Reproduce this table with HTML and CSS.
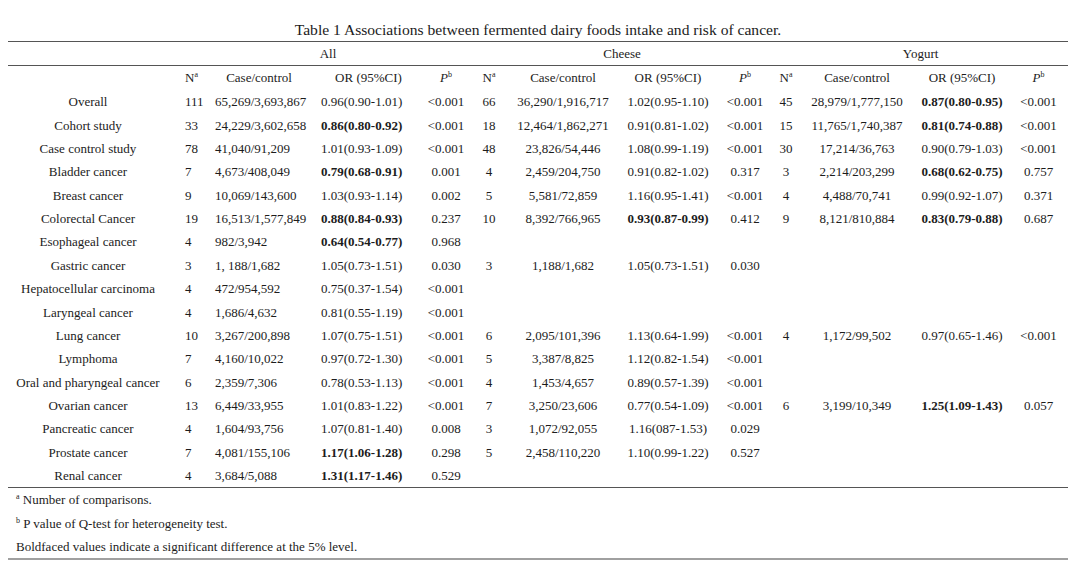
FILE: index.html
```html
<!DOCTYPE html>
<html>
<head>
<meta charset="utf-8">
<link rel="stylesheet" href="styles.css">
</head>
<body>
<div class="wrap">
  <div class="title">Table 1 Associations between fermented dairy foods intake and risk of cancer.</div>
  <table class="tbl">
    <colgroup>
      <col class="c-label"><col class="c-n1"><col class="c-cc1"><col class="c-or1"><col class="c-p1">
      <col class="c-n2"><col class="c-cc2"><col class="c-or2"><col class="c-p2">
      <col class="c-n3"><col class="c-cc3"><col class="c-or3"><col class="c-p3">
    </colgroup>
    <thead>
      <tr class="grp">
        <th></th>
        <th colspan="4">All</th>
        <th colspan="4">Cheese</th>
        <th colspan="4">Yogurt</th>
      </tr>
      <tr class="hdr">
        <th></th>
        <th class="l">N<sup>a</sup></th>
        <th class="cc1">Case/control</th>
        <th class="or1">OR (95%CI)</th>
        <th><i>P</i><sup>b</sup></th>
        <th>N<sup>a</sup></th>
        <th>Case/control</th>
        <th>OR (95%CI)</th>
        <th><i>P</i><sup>b</sup></th>
        <th>N<sup>a</sup></th>
        <th>Case/control</th>
        <th>OR (95%CI)</th>
        <th class="lastp"><i>P</i><sup>b</sup></th>
      </tr>
    </thead>
    <tbody>
      <tr><td>Overall</td><td class="l">111</td><td class="l">65,269/3,693,867</td><td class="l">0.96(0.90-1.01)</td><td>&lt;0.001</td><td>66</td><td>36,290/1,916,717</td><td>1.02(0.95-1.10)</td><td>&lt;0.001</td><td>45</td><td>28,979/1,777,150</td><td><b>0.87(0.80-0.95)</b></td><td class="lastp">&lt;0.001</td></tr>
      <tr><td>Cohort study</td><td class="l">33</td><td class="l">24,229/3,602,658</td><td class="l"><b>0.86(0.80-0.92)</b></td><td>&lt;0.001</td><td>18</td><td>12,464/1,862,271</td><td>0.91(0.81-1.02)</td><td>&lt;0.001</td><td>15</td><td>11,765/1,740,387</td><td><b>0.81(0.74-0.88)</b></td><td class="lastp">&lt;0.001</td></tr>
      <tr><td>Case control study</td><td class="l">78</td><td class="l">41,040/91,209</td><td class="l">1.01(0.93-1.09)</td><td>&lt;0.001</td><td>48</td><td>23,826/54,446</td><td>1.08(0.99-1.19)</td><td>&lt;0.001</td><td>30</td><td>17,214/36,763</td><td>0.90(0.79-1.03)</td><td class="lastp">&lt;0.001</td></tr>
      <tr><td>Bladder cancer</td><td class="l">7</td><td class="l">4,673/408,049</td><td class="l"><b>0.79(0.68-0.91)</b></td><td>0.001</td><td>4</td><td>2,459/204,750</td><td>0.91(0.82-1.02)</td><td>0.317</td><td>3</td><td>2,214/203,299</td><td><b>0.68(0.62-0.75)</b></td><td class="lastp">0.757</td></tr>
      <tr><td>Breast cancer</td><td class="l">9</td><td class="l">10,069/143,600</td><td class="l">1.03(0.93-1.14)</td><td>0.002</td><td>5</td><td>5,581/72,859</td><td>1.16(0.95-1.41)</td><td>&lt;0.001</td><td>4</td><td>4,488/70,741</td><td>0.99(0.92-1.07)</td><td class="lastp">0.371</td></tr>
      <tr><td>Colorectal Cancer</td><td class="l">19</td><td class="l">16,513/1,577,849</td><td class="l"><b>0.88(0.84-0.93)</b></td><td>0.237</td><td>10</td><td>8,392/766,965</td><td><b>0.93(0.87-0.99)</b></td><td>0.412</td><td>9</td><td>8,121/810,884</td><td><b>0.83(0.79-0.88)</b></td><td class="lastp">0.687</td></tr>
      <tr><td>Esophageal cancer</td><td class="l">4</td><td class="l">982/3,942</td><td class="l"><b>0.64(0.54-0.77)</b></td><td>0.968</td><td></td><td></td><td></td><td></td><td></td><td></td><td></td><td class="lastp"></td></tr>
      <tr><td>Gastric cancer</td><td class="l">3</td><td class="l">1, 188/1,682</td><td class="l">1.05(0.73-1.51)</td><td>0.030</td><td>3</td><td>1,188/1,682</td><td>1.05(0.73-1.51)</td><td>0.030</td><td></td><td></td><td></td><td class="lastp"></td></tr>
      <tr><td>Hepatocellular carcinoma</td><td class="l">4</td><td class="l">472/954,592</td><td class="l">0.75(0.37-1.54)</td><td>&lt;0.001</td><td></td><td></td><td></td><td></td><td></td><td></td><td></td><td class="lastp"></td></tr>
      <tr><td>Laryngeal cancer</td><td class="l">4</td><td class="l">1,686/4,632</td><td class="l">0.81(0.55-1.19)</td><td>&lt;0.001</td><td></td><td></td><td></td><td></td><td></td><td></td><td></td><td class="lastp"></td></tr>
      <tr><td>Lung cancer</td><td class="l">10</td><td class="l">3,267/200,898</td><td class="l">1.07(0.75-1.51)</td><td>&lt;0.001</td><td>6</td><td>2,095/101,396</td><td>1.13(0.64-1.99)</td><td>&lt;0.001</td><td>4</td><td>1,172/99,502</td><td>0.97(0.65-1.46)</td><td class="lastp">&lt;0.001</td></tr>
      <tr><td>Lymphoma</td><td class="l">7</td><td class="l">4,160/10,022</td><td class="l">0.97(0.72-1.30)</td><td>&lt;0.001</td><td>5</td><td>3,387/8,825</td><td>1.12(0.82-1.54)</td><td>&lt;0.001</td><td></td><td></td><td></td><td class="lastp"></td></tr>
      <tr><td>Oral and pharyngeal cancer</td><td class="l">6</td><td class="l">2,359/7,306</td><td class="l">0.78(0.53-1.13)</td><td>&lt;0.001</td><td>4</td><td>1,453/4,657</td><td>0.89(0.57-1.39)</td><td>&lt;0.001</td><td></td><td></td><td></td><td class="lastp"></td></tr>
      <tr><td>Ovarian cancer</td><td class="l">13</td><td class="l">6,449/33,955</td><td class="l">1.01(0.83-1.22)</td><td>&lt;0.001</td><td>7</td><td>3,250/23,606</td><td>0.77(0.54-1.09)</td><td>&lt;0.001</td><td>6</td><td>3,199/10,349</td><td><b>1.25(1.09-1.43)</b></td><td class="lastp">0.057</td></tr>
      <tr><td>Pancreatic cancer</td><td class="l">4</td><td class="l">1,604/93,756</td><td class="l">1.07(0.81-1.40)</td><td>0.008</td><td>3</td><td>1,072/92,055</td><td>1.16(087-1.53)</td><td>0.029</td><td></td><td></td><td></td><td class="lastp"></td></tr>
      <tr><td>Prostate cancer</td><td class="l">7</td><td class="l">4,081/155,106</td><td class="l"><b>1.17(1.06-1.28)</b></td><td>0.298</td><td>5</td><td>2,458/110,220</td><td>1.10(0.99-1.22)</td><td>0.527</td><td></td><td></td><td></td><td class="lastp"></td></tr>
      <tr><td>Renal cancer</td><td class="l">4</td><td class="l">3,684/5,088</td><td class="l"><b>1.31(1.17-1.46)</b></td><td>0.529</td><td></td><td></td><td></td><td></td><td></td><td></td><td></td><td class="lastp"></td></tr>
    </tbody>
  </table>
  <div class="notes">
    <div class="note"><sup>a</sup> Number of comparisons.</div>
    <div class="note"><sup>b</sup> P value of Q-test for heterogeneity test.</div>
    <div class="note">Boldfaced values indicate a significant difference at the 5% level.</div>
  </div>
</div>
</body>
</html>
```
FILE: styles.css
```css
html, body {
  margin: 0;
  padding: 0;
  background: #ffffff;
}
body {
  padding: 8px;
  font-family: "Liberation Serif", "Times New Roman", serif;
  color: #1c1c1c;
  font-size: 13px;
}
.wrap {
  width: 1060px;
}
.title {
  text-align: center;
  font-size: 15.6px;
  line-height: 18px;
  padding-top: 13px;
  padding-bottom: 2px;
}
.tbl {
  width: 1060px;
  border-collapse: collapse;
  table-layout: fixed;
  border-top: 1px solid #555;
}
.c-label { width: 160px; }
.c-n1 { width: 44px; }
.c-cc1 { width: 104px; }
.c-or1 { width: 105px; }
.c-p1 { width: 50px; }
.c-n2 { width: 36px; }
.c-cc2 { width: 112px; }
.c-or2 { width: 98px; }
.c-p2 { width: 56px; }
.c-n3 { width: 26px; }
.c-cc3 { width: 116px; }
.c-or3 { width: 94px; }
.c-p3 { width: 59px; }

.tbl th, .tbl td {
  padding: 0;
  text-align: center;
  white-space: nowrap;
  font-weight: normal;
}
.tbl b { font-weight: bold; }
.grp th {
  height: 23px;
  line-height: 23px;
  border-bottom: 1px solid #555;
}
.hdr th {
  height: 24px;
  line-height: 24px;
}
.tbl tbody td {
  height: 23.375px;
  line-height: 23px;
}
.tbl td.l, .tbl th.l {
  text-align: left;
}
.tbl td:nth-child(2), .tbl th:nth-child(2) { padding-left: 17px; }
.tbl td:nth-child(3) { padding-left: 3px; }
.tbl td:nth-child(4) { padding-left: 5px; }
.hdr th.cc1 { padding-right: 10px; }
.hdr th.or1 { padding-left: 0; }
sup {
  font-size: 8px;
  line-height: 0;
  vertical-align: 5px;
}
.notes {
  border-top: 1px solid #555;
  border-bottom: 2px solid #a0a0a0;
}
.note {
  height: 23.33px;
  line-height: 23px;
  padding-left: 8px;
}
```
